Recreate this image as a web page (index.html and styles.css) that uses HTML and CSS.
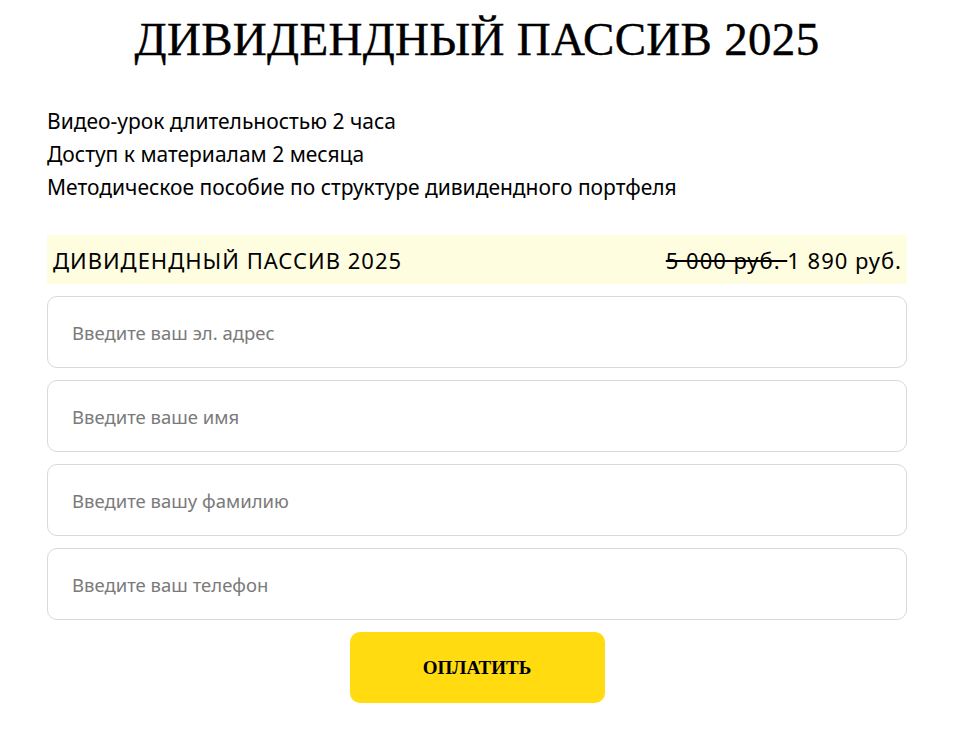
FILE: index.html
```html
<!DOCTYPE html>
<html lang="ru">
<head>
<meta charset="utf-8">
<link rel="stylesheet" href="styles.css">
</head>
<body>
<div class="page">
  <h1 class="title">ДИВИДЕНДНЫЙ ПАССИВ 2025</h1>
  <ul class="features">
    <li>Видео-урок длительностью 2 часа</li>
    <li>Доступ к материалам 2 месяца</li>
    <li>Методическое пособие по структуре дивидендного портфеля</li>
  </ul>
  <div class="product">
    <span class="product-name">ДИВИДЕНДНЫЙ ПАССИВ 2025</span>
    <span class="product-price"><s class="old">5 000 руб. </s>1 890 руб.</span>
  </div>
  <form class="form">
    <input class="field" type="email" placeholder="Введите ваш эл. адрес">
    <input class="field" type="text" placeholder="Введите ваше имя">
    <input class="field" type="text" placeholder="Введите вашу фамилию">
    <input class="field" type="tel" placeholder="Введите ваш телефон">
    <button class="pay" type="button">ОПЛАТИТЬ</button>
  </form>
</div>
</body>
</html>
```
FILE: styles.css
```css
* { box-sizing: border-box; }
html, body { margin: 0; padding: 0; background: #fff; }
body { font-family: "Noto Sans", Roboto, sans-serif; color: #000; }
.page {
  width: 860px;
  margin: 0 auto;
  display: flex;
  flex-direction: column;
}
.title {
  margin: 13px 0 0;
  text-align: center;
  font-family: "Liberation Serif", serif;
  font-weight: normal;
  font-size: 47px;
  line-height: 52px;
  letter-spacing: 0.3px;
  -webkit-text-stroke: 0.4px #000;
}
.features {
  list-style: none;
  margin: 40px 0 0;
  padding: 0;
  font-size: 21px;
  line-height: 33px;
}
.product {
  margin-top: 31px;
  height: 49px;
  background: #fffde0;
  display: flex;
  align-items: center;
  justify-content: space-between;
  padding: 0 6px;
  font-size: 22px;
  letter-spacing: 1px;
}
.product-price { margin-right: -1px; }
.old { text-decoration: line-through; }
.form {
  margin-top: 12px;
  display: flex;
  flex-direction: column;
  gap: 12px;
}
.field {
  height: 72px;
  border: 1px solid #d9d9d9;
  border-radius: 10px;
  padding: 0 24px;
  font-family: "Noto Sans", Roboto, sans-serif;
  font-size: 18.5px;
  color: #000;
  outline: none;
}
.field::placeholder { color: #7a7a7a; }
.pay {
  align-self: center;
  width: 255px;
  height: 71px;
  border: none;
  border-radius: 10px;
  background: #ffdb10;
  font-family: "Liberation Serif", serif;
  font-weight: bold;
  font-size: 19px;
  color: #000;
}
```
